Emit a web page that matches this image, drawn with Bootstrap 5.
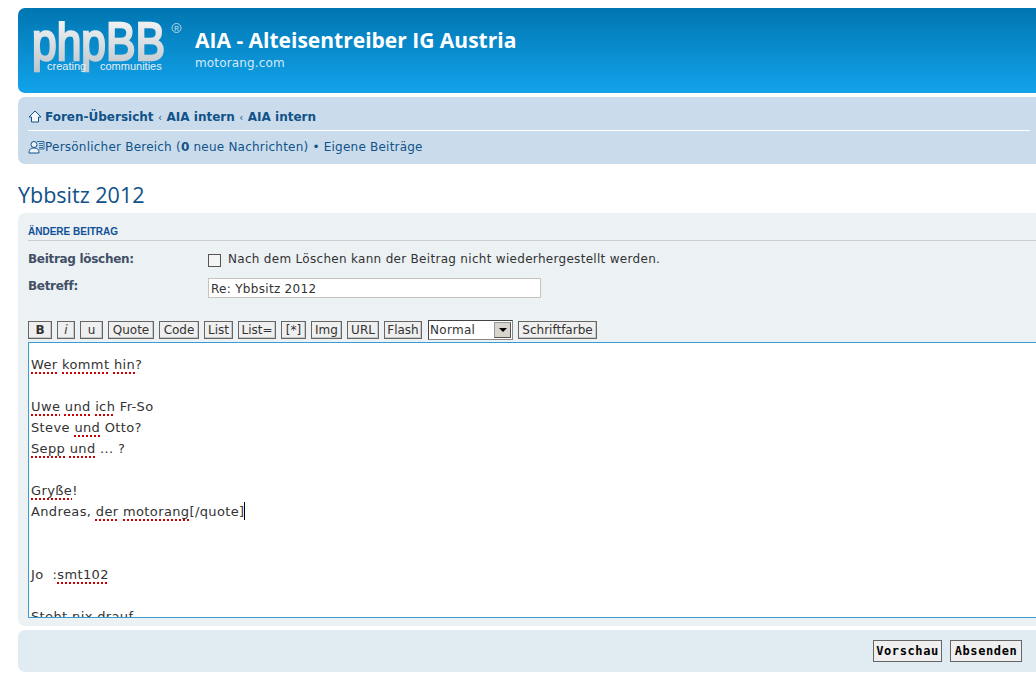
<!DOCTYPE html>
<html lang="de">
<head>
<meta charset="utf-8">
<title>Ybbsitz 2012</title>
<link href="https://cdn.jsdelivr.net/npm/bootstrap@5.3.0/dist/css/bootstrap.min.css" rel="stylesheet">
<style>
html,body{height:691px;overflow:hidden;background:#fff}
body{font-family:"DejaVu Sans",Verdana,sans-serif;font-size:11.5px;color:#333}
.forum-wrap{width:1040px;padding:8px 0 0 18px}
.head-bar{height:85px;background:linear-gradient(#0076b1,#12a3eb);border-radius:7px 0 0 7px;padding:13px 0 0 15px;gap:12px}
.site-title{font-family:"Open Sans",sans-serif;font-size:21px;font-weight:700;color:#fff;line-height:24px;margin-top:7px}
.site-sub{font-size:12px;color:#d4e9f7;line-height:14px;margin-top:4px;letter-spacing:.15px}
.nav-panel{height:67px;margin-top:4px;background:#cadceb;border-radius:7px 0 0 7px;padding:0 10px}
.crumb-row{height:34px;border-bottom:1px solid #fff;color:#105289;font-weight:700;font-size:12px;padding-top:6px;gap:3px}
.crumb-row i{font-style:normal;font-weight:400;font-size:10px;margin:0 4.5px}
.user-row{height:31px;color:#105289;font-size:12px;letter-spacing:.22px}
.user-row b{font-weight:700}
.post-title{font-family:"Open Sans",sans-serif;font-size:21.5px;font-weight:400;color:#105289;line-height:28px;margin:17px 0 4px}
.edit-panel{height:413px;background:#ecf1f3;border-radius:7px 0 0 7px;padding:0 0 0 10px}
.sect-head{height:28px;line-height:13px;padding-top:12px;border-bottom:1px solid #ccc;font-family:"Liberation Sans",sans-serif;font-weight:700;font-size:10px;color:#115098;box-sizing:border-box}
.form-line{display:flex;align-items:flex-start}
.f-label{width:180px;font-weight:700;font-size:12px;color:#425067;letter-spacing:-.3px;line-height:16px}
.del-line{margin-top:10px;height:27px}
.f-check{width:13px;height:13px;border:1px solid #555;background:#f4f4f4;margin-top:3px;margin-right:7px}
.del-note{font-size:12px;color:#333;letter-spacing:.3px;line-height:16px}
.subj-input{width:333px;height:20px;border:1px solid #c7c3bf;background:#fff;font:12px "DejaVu Sans",sans-serif;color:#333;padding:2px 2px 0;letter-spacing:.3px}
.tool-row{margin-top:22px;gap:5px;height:20px}
.tb-btn{height:18px;margin-top:1px;border:1px solid #666;background:#efefef;box-shadow:inset -1px -1px 0 #c8c8c8;font-size:12px;line-height:15px;padding:0;color:#333;text-align:center;font-family:"DejaVu Sans",sans-serif}
.w24{width:24px}.w18{width:18px}.w23{width:23px}.w46{width:46px}.w40{width:40px}.w29{width:29px}.w38{width:38px}.w25{width:25px}.w31{width:31px}.w32{width:32px}.w79{width:79px}
.tb-select{width:85px;height:20px;border:1px solid #444;border-right-color:#888;border-bottom-color:#888;background:#fff;font-size:12px;line-height:19px;padding-left:1px;margin-left:1px;justify-content:space-between;letter-spacing:.3px}
.tb-arrow{width:17px;height:16px;margin:1px;background:#d8d4cc;border:1px solid #999;border-right-color:#555;border-bottom-color:#555}
.tb-arrow::after{content:"";display:block;margin:5px auto 0;width:0;border-left:4px solid transparent;border-right:4px solid transparent;border-top:4px solid #000}
.msg-box{margin-top:2px;height:276px;border:1px solid #3a9bcf;background:#fff;padding:11px 2px 0;font-size:13px;line-height:21px;color:#333;overflow:hidden;white-space:pre;letter-spacing:.37px}
.sp{text-decoration:underline dotted #c00 2px;text-underline-offset:3px}
.caret-bar{display:inline-block;width:1px;height:18px;background:#000;vertical-align:-4px}
.submit-panel{height:42px;margin-top:4px;background:#e1ebf2;border-radius:7px 0 0 7px;padding:10px 18px 0 0;gap:8px}
.sub-btn{height:22px;border:1px solid #666;background:#efefef;font-weight:700;font-size:12px;line-height:19px;color:#000;padding:0;letter-spacing:.6px;font-family:"DejaVu Sans Mono","DejaVu Sans",monospace}
.w69{width:69px}.w72{width:72px}
.logo-svg{display:block;width:150px;height:60px;flex:none}
</style>
</head>
<body>
<div class="forum-wrap">
  <header class="head-bar d-flex">
    <svg class="logo-svg" viewBox="0 0 150 60" role="img" aria-label="phpBB">
      <defs><linearGradient id="lg" x1="0" y1="0" x2="0" y2="1"><stop offset="0" stop-color="#fbfbfb"/><stop offset="1" stop-color="#bcc6cc"/></linearGradient></defs>
      <text x="-1" y="39" font-family="Liberation Sans" font-size="54" textLength="133" lengthAdjust="spacingAndGlyphs" fill="url(#lg)" stroke="url(#lg)" stroke-width="2.500">phpBB</text>
      <text x="14" y="49" font-family="Liberation Sans" font-size="11" fill="#e8eef2">creating</text>
      <text x="67" y="49" font-family="Liberation Sans" font-size="11" fill="#e8eef2">communities</text>
      <circle cx="143.500" cy="7" r="4.500" fill="none" stroke="#dfe8ee" stroke-width=".8"/>
      <text x="141.300" y="9.500" font-family="Liberation Sans" font-size="6.500" fill="#dfe8ee">R</text>
    </svg>
    <div>
      <div class="site-title">AIA - Alteisentreiber IG Austria</div>
      <div class="site-sub">motorang.com</div>
    </div>
  </header>
  <nav class="nav-panel">
    <div class="crumb-row d-flex align-items-center">
      <svg width="14" height="13" viewBox="0 0 14 13"><path d="M7 1 L13 7 H10.500 V12 H3.500 V7 H1 Z" fill="#f4f8fb" stroke="#105289"/></svg>
      <span>Foren-Übersicht<i>‹</i>AIA intern<i>‹</i>AIA intern</span>
    </div>
    <div class="user-row d-flex align-items-center">
      <svg width="17" height="14" viewBox="0 0 17 14"><circle cx="6" cy="4.500" r="3" fill="#eef4f9" stroke="#105289"/><path d="M1 13 C1 9 3 8 6 8 C9 8 11 9 11 13 Z" fill="#eef4f9" stroke="#105289"/><path d="M9 1.500 H16 V9 H11 M11 3.500 H15 M11 5.500 H15 M11 7.500 H15" fill="none" stroke="#105289" stroke-width=".8"/></svg>
      <span>Persönlicher Bereich (<b>0</b> neue Nachrichten) • Eigene Beiträge</span>
    </div>
  </nav>
  <h2 class="post-title">Ybbsitz 2012</h2>
  <main class="edit-panel">
    <div class="sect-head">ÄNDERE BEITRAG</div>
    <div class="form-line del-line">
      <div class="f-label">Beitrag löschen:</div>
      <span class="f-check"></span>
      <span class="del-note">Nach dem Löschen kann der Beitrag nicht wiederhergestellt werden.</span>
    </div>
    <div class="form-line">
      <div class="f-label">Betreff:</div>
      <input class="subj-input" type="text" value="Re: Ybbsitz 2012">
    </div>
    <div class="tool-row d-flex">
      <button class="tb-btn w24 fw-bold">B</button>
      <button class="tb-btn w18 fst-italic">i</button>
      <button class="tb-btn w23">u</button>
      <button class="tb-btn w46">Quote</button>
      <button class="tb-btn w40">Code</button>
      <button class="tb-btn w29">List</button>
      <button class="tb-btn w38">List=</button>
      <button class="tb-btn w25">[*]</button>
      <button class="tb-btn w31">Img</button>
      <button class="tb-btn w32">URL</button>
      <button class="tb-btn w38">Flash</button>
      <div class="tb-select d-flex"><span>Normal</span><span class="tb-arrow"></span></div>
      <button class="tb-btn w79">Schriftfarbe</button>
    </div>
    <div class="msg-box"><span class="sp">Wer</span> <span class="sp">kommt</span> <span class="sp">hin</span>?

<span class="sp">Uwe</span> <span class="sp">und</span> <span class="sp">ich</span> Fr-So
Steve <span class="sp">und</span> Otto?
<span class="sp">Sepp</span> <span class="sp">und</span> ... ?

<span class="sp">Gryße</span>!
Andreas, <span class="sp">der</span> <span class="sp">motorang</span>[/quote]<span class="caret-bar"></span>


Jo  :<span class="sp">smt102</span>

Steht nix drauf</div>
  </main>
  <div class="submit-panel d-flex justify-content-end">
    <button class="sub-btn w69">Vorschau</button>
    <button class="sub-btn w72">Absenden</button>
  </div>
</div>
</body>
</html>
